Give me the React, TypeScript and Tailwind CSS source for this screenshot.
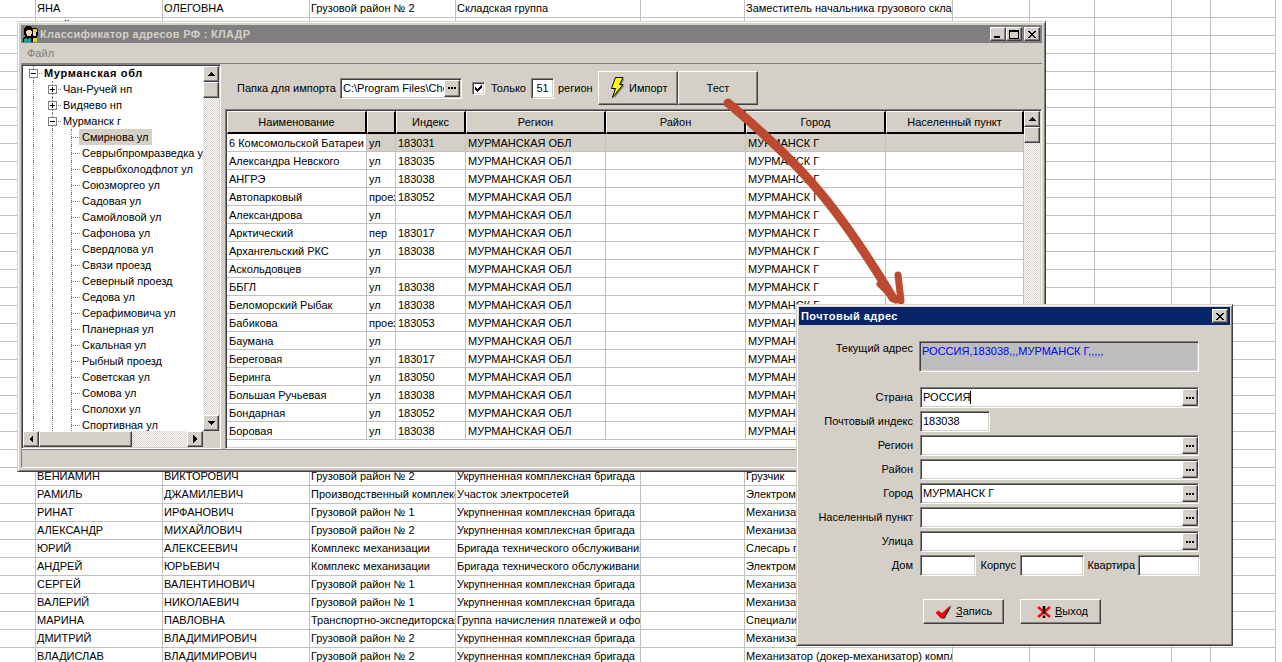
import type { ReactNode } from "react";

const FACE = "bg-[#d4d0c8]";
const RAISED =
  "border border-t-white border-l-white border-r-[#404040] border-b-[#404040] bg-[#d4d0c8] shadow-[inset_-1px_-1px_0_#808080]";
const SUNKEN =
  "border border-t-[#808080] border-l-[#808080] border-r-white border-b-white shadow-[inset_1px_1px_0_#404040,inset_-1px_-1px_0_#d4d0c8]";
const WINDOW =
  "border border-t-[#d4d0c8] border-l-[#d4d0c8] border-r-[#404040] border-b-[#404040] bg-[#d4d0c8] shadow-[inset_1px_1px_0_#ffffff,inset_-1px_-1px_0_#808080]";
const CHECKER = "bg-[repeating-conic-gradient(#d4d0c8_0%_25%,#ffffff_0%_50%)] bg-[length:2px_2px]";

const SHEET_WIDTHS = [36, 127, 147, 146, 185, 104, 208, 77, 65, 77, 39, 65];

const UKR = "Укрупненная комплексная бригада";
const SHEET_ROWS: Record<number, string[]> = {
  0: ["", "ЯНА", "ОЛЕГОВНА", "Грузовой район № 2", "Складская группа", "", "Заместитель начальника грузового склада"],
  1: ["", "ЮЛИЙ", "АЛЕКСАНДРОВИЧ", "Грузовой район № 2", "Шиномонтаж", "", "Грузчик"],
  26: ["", "ВЕНИАМИН", "ВИКТОРОВИЧ", "Грузовой район № 2", UKR, "", "Грузчик"],
  27: ["", "РАМИЛЬ", "ДЖАМИЛЕВИЧ", "Производственный комплекс", "Участок электросетей", "", "Электромонтер"],
  28: ["", "РИНАТ", "ИРФАНОВИЧ", "Грузовой район № 1", UKR, "", "Механизатор"],
  29: ["", "АЛЕКСАНДР", "МИХАЙЛОВИЧ", "Грузовой район № 2", UKR, "", "Механизатор"],
  30: ["", "ЮРИЙ", "АЛЕКСЕЕВИЧ", "Комплекс механизации", "Бригада технического обслуживания", "", "Слесарь по ремонту"],
  31: ["", "АНДРЕЙ", "ЮРЬЕВИЧ", "Комплекс механизации", "Бригада технического обслуживания", "", "Электромонтер"],
  32: ["", "СЕРГЕЙ", "ВАЛЕНТИНОВИЧ", "Грузовой район № 1", UKR, "", "Механизатор"],
  33: ["", "ВАЛЕРИЙ", "НИКОЛАЕВИЧ", "Грузовой район № 1", UKR, "", "Механизатор"],
  34: ["", "МАРИНА", "ПАВЛОВНА", "Транспортно-экспедиторская", "Группа начисления платежей и оформления", "", "Специалист"],
  35: ["", "ДМИТРИЙ", "ВЛАДИМИРОВИЧ", "Грузовой район № 2", UKR, "", "Механизатор"],
  36: ["", "ВЛАДИСЛАВ", "ВЛАДИМИРОВИЧ", "Грузовой район № 2", UKR, "", "Механизатор (докер-механизатор) комплексной бригады"],
};

const TREE_STREETS = [
  "Смирнова ул",
  "Севрыбпромразведка ул",
  "Севрыбхолодфлот ул",
  "Союзморгео ул",
  "Садовая ул",
  "Самойловой ул",
  "Сафонова ул",
  "Свердлова ул",
  "Связи проезд",
  "Северный проезд",
  "Седова ул",
  "Серафимовича ул",
  "Планерная ул",
  "Скальная ул",
  "Рыбный проезд",
  "Советская ул",
  "Сомова ул",
  "Сполохи ул",
  "Спортивная ул",
];

const GRID_WIDTHS = [140, 29, 70, 140, 140, 140, 138];
const GRID_HEAD = ["Наименование", "", "Индекс", "Регион", "Район", "Город", "Населенный пункт"];
const GRID_ROWS = [
  ["6 Комсомольской Батареи", "ул", "183031"],
  ["Александра Невского", "ул", "183035"],
  ["АНГРЭ", "ул", "183038"],
  ["Автопарковый", "проезд", "183052"],
  ["Александрова", "ул", ""],
  ["Арктический", "пер", "183017"],
  ["Архангельский РКС", "ул", "183038"],
  ["Аскольдовцев", "ул", ""],
  ["ББГЛ", "ул", "183038"],
  ["Беломорский Рыбак", "ул", "183038"],
  ["Бабикова", "проезд", "183053"],
  ["Баумана", "ул", ""],
  ["Береговая", "ул", "183017"],
  ["Беринга", "ул", "183050"],
  ["Большая Ручьевая", "ул", "183038"],
  ["Бондарная", "ул", "183052"],
  ["Боровая", "ул", "183038"],
];

function Arrow({ dir }: { dir: "up" | "down" | "left" | "right" }) {
  const points = {
    up: "4,1 0,5 8,5",
    down: "0,1 8,1 4,5",
    left: "5,0 5,8 1,4",
    right: "1,0 1,8 5,4",
  }[dir];
  const box = dir === "up" || dir === "down" ? "w-2 h-1.5" : "w-1.5 h-2";
  return (
    <svg viewBox={dir === "up" || dir === "down" ? "0 0 8 6" : "0 0 6 8"} className={box}>
      <polygon points={points} fill="#000" shapeRendering="crispEdges" />
    </svg>
  );
}

function ScrollBtn({ dir }: { dir: "up" | "down" | "left" | "right" }) {
  return (
    <div className={`w-4 h-4 shrink-0 flex items-center justify-center ${RAISED}`}>
      <Arrow dir={dir} />
    </div>
  );
}

function DotsBtn({ className = "" }: { className?: string }) {
  return (
    <div className={`flex items-center justify-center gap-px shrink-0 ${RAISED} ${className}`}>
      <span className="w-[2px] h-[2px] bg-black" />
      <span className="w-[2px] h-[2px] bg-black" />
      <span className="w-[2px] h-[2px] bg-black" />
    </div>
  );
}

function Sheet() {
  const rows = Array.from({ length: 37 }, (_, i) => i);
  return (
    <div className="flex flex-col w-[1276px]">
      {rows.map((r) => (
        <div key={r} className="flex h-[18px] shrink-0 border-b border-[#c0c0c0]">
          {SHEET_WIDTHS.map((w, c) => (
            <div
              key={c}
              style={{ width: w }}
              className="shrink-0 border-r border-[#c0c0c0] pl-px leading-[16px] whitespace-nowrap overflow-hidden"
            >
              {SHEET_ROWS[r]?.[c] ?? ""}
            </div>
          ))}
        </div>
      ))}
    </div>
  );
}

function AppIcon() {
  return (
    <svg viewBox="0 0 16 16" className="w-4 h-4 shrink-0" shapeRendering="crispEdges">
      <path d="M9 2h5v1h1v7h-1v6H8V2z" fill="#000" />
      <path d="M10 3h4v3h-4z" fill="#e8d020" />
      <path d="M10 6h3v4h-3z" fill="#f4d8b0" />
      <path d="M10 12h4v4h-4z" fill="#e8d020" />
      <path d="M3 0h5v1h1v1h1v6H9v2H8v1H2V9H1V2h1V1h1z" fill="#000" />
      <path d="M4 4h4v1h1v3H8v2H4V8H3V5h1z" fill="#f4d8b0" />
      <path d="M1 11h8v5H0v-4h1z" fill="#000" />
      <path d="M2 12h2v1h2v-1h2v4H1v-3h1z" fill="#00a8a8" />
    </svg>
  );
}

function CaptionBtn({ children, className = "" }: { children: ReactNode; className?: string }) {
  return <div className={`h-[14px] flex items-center justify-center shrink-0 ${RAISED} ${className}`}>{children}</div>;
}

function TitleBar() {
  return (
    <div className="h-[18px] shrink-0 bg-[#808080] flex items-center pl-[2px] pr-[2px]">
      <AppIcon />
      <span className="ml-[1px] flex-1 font-bold text-[#d4d0c8] tracking-[0.28px]">Классификатор адресов РФ : КЛАДР</span>
      <CaptionBtn className="w-[16px]">
        <span className="w-[6px] h-[2px] bg-black mt-[6px] mr-[2px]" />
      </CaptionBtn>
      <CaptionBtn className="w-[16px]">
        <span className="w-[10px] h-[9px] border border-t-2 border-black" />
      </CaptionBtn>
      <CaptionBtn className="w-[16px] ml-[2px]">
        <CloseGlyph />
      </CaptionBtn>
    </div>
  );
}

function CloseGlyph() {
  return (
    <svg viewBox="0 0 8 7" className="w-2 h-[7px]" shapeRendering="crispEdges">
      <path d="M0 0h2v1h1v1h2V1h1V0h2v1H7v1H6v1H5v1h1v1h1v1h1v1H6V6H5V5H3v1H2v1H0V6h1V5h1V4h1V3H2V2H1V1H0z" fill="#000" />
    </svg>
  );
}

function TreeSlot({ line, box, hook }: { line?: boolean; box?: "plus" | "minus"; hook?: boolean }) {
  return (
    <div className="relative w-[19px] h-4 shrink-0">
      {line && <span className="absolute left-0 top-0 bottom-0 border-l border-dotted border-[#808080]" />}
      {hook && <span className="absolute left-0 top-[8px] w-[9px] border-t border-dotted border-[#808080]" />}
      {box && (
        <span className="absolute -left-[4px] top-[4px] w-[9px] h-[9px] border border-[#808080] bg-white flex items-center justify-center">
          <span className="relative w-[5px] h-px bg-black">
            {box === "plus" && <span className="absolute left-[2px] -top-[2px] w-px h-[5px] bg-black" />}
          </span>
        </span>
      )}
    </div>
  );
}

function TreeRow({ level, box, label, bold, selected }: { level: number; box?: "plus" | "minus"; label: string; bold?: boolean; selected?: boolean }) {
  return (
    <div className="flex items-center h-4 shrink-0 pl-[10px]">
      <TreeSlot line box={level === 0 ? box : undefined} hook={level === 0} />
      {level >= 1 && <TreeSlot line box={level === 1 ? box : undefined} hook={level === 1} />}
      {level >= 2 && <TreeSlot line hook />}
      <span className={`-ml-[11px] px-[3px] leading-4 whitespace-nowrap ${bold ? "font-bold tracking-[0.65px]" : ""} ${selected ? "bg-[#d4d0c8]" : "bg-white"}`}>
        {label}
      </span>
    </div>
  );
}

function Tree() {
  return (
    <div className={`w-[200px] shrink-0 p-px bg-white flex flex-col ${SUNKEN}`}>
      <div className="flex flex-1 min-h-0">
        <div className="flex-1 min-w-0 overflow-hidden flex flex-col">
          <div className="-mt-px flex flex-col">
            <TreeRow level={0} box="minus" label="Мурманская обл" bold />
            <TreeRow level={1} box="plus" label="Чан-Ручей нп" />
            <TreeRow level={1} box="plus" label="Видяево нп" />
            <TreeRow level={1} box="minus" label="Мурманск г" />
            {TREE_STREETS.map((s, i) => (
              <TreeRow key={s} level={2} label={s} selected={i === 0} />
            ))}
          </div>
        </div>
        <div className="w-4 shrink-0 flex flex-col">
          <ScrollBtn dir="up" />
          <div className={`w-4 h-4 shrink-0 ${RAISED}`} />
          <div className={`flex-1 ${CHECKER}`} />
          <ScrollBtn dir="down" />
        </div>
      </div>
      <div className="flex h-4 shrink-0">
        <ScrollBtn dir="left" />
        <div className={`w-[93px] h-4 shrink-0 ${RAISED}`} />
        <div className={`flex-1 ${CHECKER}`} />
        <ScrollBtn dir="right" />
        <div className={`w-4 h-4 shrink-0 ${FACE}`} />
      </div>
    </div>
  );
}

function Bolt() {
  return (
    <svg viewBox="0 0 15 22" className="w-[15px] h-[22px] shrink-0">
      <path d="M6.5 2h8L11 8.5h3.5L4 22l3-9.5H3.5z" fill="#808080" />
      <path d="M5.5 .5h7.5L9.5 7.5h3.5L2.5 20.5l3-9H1.5z" fill="#ffff00" stroke="#000" strokeWidth="1" />
    </svg>
  );
}

function Toolbar() {
  return (
    <div className="h-[45px] shrink-0 pt-[3px] pl-[12px] flex items-center">
      <span className="w-[103px] shrink-0 whitespace-nowrap">Папка для импорта</span>
      <div className={`w-[122px] h-[21px] shrink-0 bg-white flex items-center overflow-hidden pl-[2px] pr-px ${SUNKEN}`}>
        <span className="flex-1 min-w-0 overflow-hidden whitespace-nowrap">C:\Program Files\Chernov\Kladr</span>
        <DotsBtn className="w-4 h-[17px]" />
      </div>
      <div className={`ml-[10px] w-[13px] h-[13px] shrink-0 bg-white flex items-center justify-center ${SUNKEN}`}>
        <svg viewBox="0 0 7 7" className="w-[7px] h-[7px]" shapeRendering="crispEdges">
          <path d="M6 0h1v3H6v1H5v1H4v1H3v1H2V6H1V5H0V2h1v1h1v1h1V3h1V2h1V1h1z" fill="#000" />
        </svg>
      </div>
      <span className="ml-[6px] w-[40px] shrink-0">Только</span>
      <div className={`w-[23px] h-[21px] shrink-0 bg-white flex items-center justify-center ${SUNKEN}`}>51</div>
      <span className="ml-[4px] w-[40px] shrink-0">регион</span>
      <div className={`w-[80px] h-[34px] shrink-0 flex items-center pl-[11px] ${RAISED}`}>
        <Bolt />
        <span className="ml-[4px]">Импорт</span>
      </div>
      <div className={`w-[80px] h-[34px] shrink-0 flex items-center justify-center ${RAISED}`}>Тест</div>
    </div>
  );
}

function DataGrid() {
  return (
    <div className={`flex-1 min-h-0 p-px bg-white flex ${SUNKEN}`}>
      <div className="w-[797px] shrink-0 flex flex-col overflow-hidden">
        <div className="flex h-[23px] shrink-0">
          {GRID_HEAD.map((h, i) => (
            <div
              key={i}
              style={{ width: GRID_WIDTHS[i] }}
              className="shrink-0 flex items-center justify-center bg-[#d4d0c8] border-t border-l border-t-white border-l-white border-r-2 border-b-2 border-r-black border-b-black"
            >
              {h}
            </div>
          ))}
        </div>
        {GRID_ROWS.map((row, r) => {
          const cells = [...row, "МУРМАНСКАЯ ОБЛ", "", "МУРМАНСК Г", ""];
          return (
            <div key={r} className="flex h-[18px] shrink-0">
              {cells.map((c, i) => (
                <div
                  key={i}
                  style={{ width: GRID_WIDTHS[i] }}
                  className={`shrink-0 border-r border-b border-[#c0c0c0] pl-[2px] leading-[18px] whitespace-nowrap overflow-hidden ${r === 0 && i > 0 ? "bg-[#d4d0c8]" : ""}`}
                >
                  {c}
                </div>
              ))}
            </div>
          );
        })}
      </div>
      <div className="w-4 shrink-0 flex flex-col">
        <ScrollBtn dir="up" />
        <div className={`w-4 h-4 shrink-0 ${RAISED}`} />
        <div className={`flex-1 ${CHECKER}`} />
        <ScrollBtn dir="down" />
      </div>
    </div>
  );
}

function MainWindow() {
  return (
    <section className={`absolute left-[17px] top-[21px] w-[1029px] h-[451px] p-[3px] flex flex-col ${WINDOW}`}>
      <TitleBar />
      <div className="h-[21px] shrink-0 border-b border-[#808080] pl-[6px] flex items-center text-[#808080]">Файл</div>
      <div className="h-[385px] shrink-0 flex">
        <Tree />
        <div className="w-[4px] shrink-0" />
        <div className="flex-1 min-w-0 flex flex-col">
          <Toolbar />
          <DataGrid />
        </div>
      </div>
      <div className="h-[19px] shrink-0 border border-t-[#808080] border-l-[#808080] border-r-white border-b-white" />
    </section>
  );
}

function AddressField({ label, value, caret }: { label: string; value?: string; caret?: boolean }) {
  return (
    <div className="flex h-[21px] items-center">
      <span className="w-[114px] shrink-0 text-right whitespace-nowrap">{label}</span>
      <div className={`ml-[7px] w-[279px] h-[21px] shrink-0 bg-white flex items-center pl-[2px] ${SUNKEN}`}>
        <span className="flex-1 whitespace-nowrap flex items-center">
          {value}
          {caret && <span className="w-px h-[13px] bg-black" />}
        </span>
        <DotsBtn className="w-4 h-[17px]" />
      </div>
    </div>
  );
}

function SmallInput({ className = "", value = "" }: { className?: string; value?: string }) {
  return <div className={`h-[21px] shrink-0 bg-white pl-[2px] leading-[19px] ${SUNKEN} ${className}`}>{value}</div>;
}

function DialogButton({ icon, first, rest, className = "" }: { icon: ReactNode; first: string; rest: string; className?: string }) {
  return (
    <div className={`w-[81px] h-[25px] shrink-0 flex items-center pl-[11px] ${RAISED} ${className}`}>
      {icon}
      <span className="ml-[4px]">
        <span className="underline">{first}</span>
        {rest}
      </span>
    </div>
  );
}

function Dialog() {
  return (
    <section className={`absolute left-[796px] top-[304px] w-[437px] h-[342px] p-[2px] flex flex-col ${WINDOW}`}>
      <div className="h-[18px] shrink-0 bg-[#0a246a] flex items-center justify-between pl-[2px] pr-[2px]">
        <span className="font-bold text-white tracking-[0.45px]">Почтовый адрес</span>
        <CaptionBtn className="w-[16px]">
          <CloseGlyph />
        </CaptionBtn>
      </div>
      <div className="flex flex-col gap-[3px] pt-[16px]">
        <div className="flex mb-[12px]">
          <span className="w-[114px] shrink-0 text-right leading-[14px] whitespace-nowrap">Текущий адрес</span>
          <div className={`ml-[6px] w-[280px] h-[31px] shrink-0 bg-[#bdbdbd] text-[#0000ff] pl-[2px] leading-[17px] pt-px ${SUNKEN}`}>
            РОССИЯ,183038,,,МУРМАНСК Г,,,,,
          </div>
        </div>
        <AddressField label="Страна" value="РОССИЯ" caret />
        <div className="flex h-[21px] items-center">
          <span className="w-[114px] shrink-0 text-right whitespace-nowrap">Почтовый индекс</span>
          <SmallInput className="ml-[7px] w-[70px]" value="183038" />
        </div>
        <AddressField label="Регион" />
        <AddressField label="Район" />
        <AddressField label="Город" value="МУРМАНСК Г" />
        <AddressField label="Населенный пункт" />
        <AddressField label="Улица" />
        <div className="flex h-[21px] items-center">
          <span className="w-[114px] shrink-0 text-right">Дом</span>
          <SmallInput className="ml-[7px] w-[56px]" />
          <span className="w-[40px] shrink-0 text-right">Корпус</span>
          <SmallInput className="ml-[4px] w-[64px]" />
          <span className="w-[51px] shrink-0 text-right">Квартира</span>
          <SmallInput className="ml-[3px] w-[62px]" />
        </div>
      </div>
      <div className="flex mt-[23px] pl-[124px] gap-[16px]">
        <DialogButton
          first="З"
          rest="апись"
          icon={
            <svg viewBox="0 0 17 14" className="w-[17px] h-[14px] shrink-0">
              <path d="M1 8l3-2 3 3 9-9-7 13H6z" fill="#000" transform="translate(.6 .6)" />
              <path d="M0.5 7.5l3-2 3 3 9-8.5-7 13H5.5z" fill="#ff0000" />
            </svg>
          }
        />
        <DialogButton
          first="В"
          rest="ыход"
          className="pl-[16px]"
          icon={
            <svg viewBox="0 0 14 12" className="w-[14px] h-[12px] shrink-0">
              <path d="M1 1l12 10M13 1L1 11" stroke="#ff0000" strokeWidth="2.4" />
              <path d="M7 0v8M7 9.500v2.500" stroke="#000" strokeWidth="2.500" />
            </svg>
          }
        />
      </div>
    </section>
  );
}

export default function App() {
  return (
    <div className="relative w-[1282px] h-[662px] overflow-hidden bg-white text-black text-[11px] font-['Liberation_Sans',sans-serif]">
      <Sheet />
      <MainWindow />
      <svg viewBox="0 0 1282 662" className="absolute inset-0 w-[1282px] h-[662px] pointer-events-none">
        <path
          d="M728 103C745 117 785 152 812 183C835 209 858 240 893 298"
          fill="none"
          stroke="#bc4a30"
          strokeWidth="9"
          strokeLinecap="round"
        />
        <path d="M880 284L896 300M898 275L901 301" fill="none" stroke="#bc4a30" strokeWidth="7" strokeLinecap="round" />
      </svg>
      <Dialog />
    </div>
  );
}
